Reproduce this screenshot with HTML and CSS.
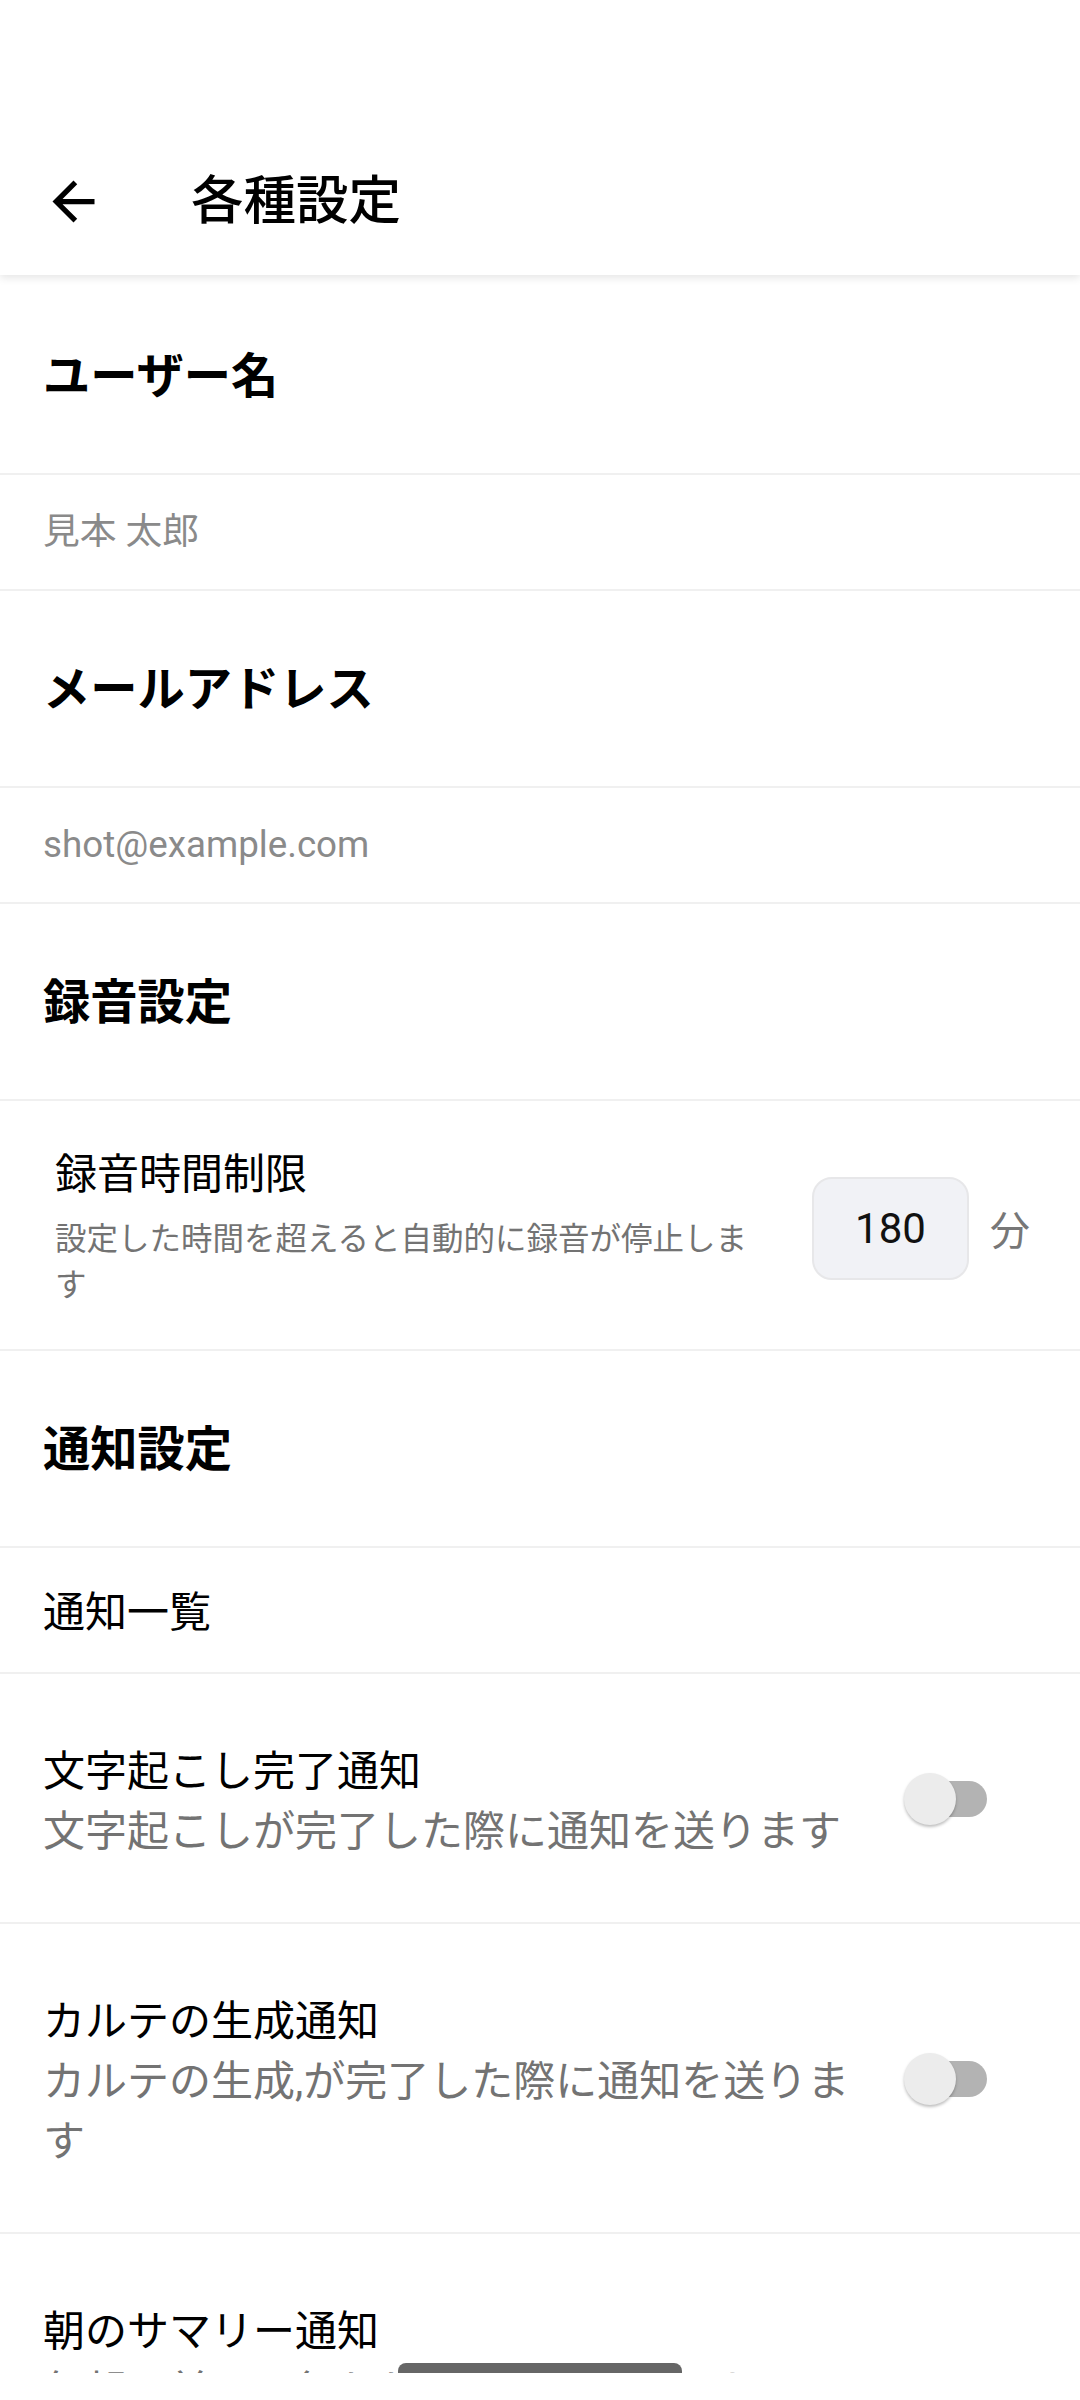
FILE: index.html
```html
<!DOCTYPE html>
<html lang="ja">
<head>
<meta charset="utf-8">
<title>各種設定</title>
<link rel="stylesheet" href="styles.css">
</head>
<body>
<div class="screen">
  <header class="appbar">
    <button class="back" aria-label="戻る">
      <svg viewBox="0 0 24 24" width="63" height="63"><path d="M20 11H7.83l5.59-5.59L12 4l-8 8 8 8 1.41-1.41L7.83 13H20v-2z" fill="#000"/></svg>
    </button>
    <h1 class="title">各種設定</h1>
  </header>

  <main class="list">
    <div class="section-head first">ユーザー名</div>
    <div class="value-row">見本 太郎</div>

    <div class="section-head">メールアドレス</div>
    <div class="value-row">shot@example.com</div>

    <div class="section-head">録音設定</div>
    <div class="limit-row">
      <div class="limit-text">
        <div class="limit-title">録音時間制限</div>
        <div class="limit-desc">設定した時間を超えると自動的に録音が停止します</div>
      </div>
      <div class="num-box">180</div>
      <div class="unit">分</div>
    </div>

    <div class="section-head">通知設定</div>
    <div class="link-row">通知一覧</div>

    <div class="toggle-row">
      <div class="toggle-text">
        <div class="toggle-title">文字起こし完了通知</div>
        <div class="toggle-desc">文字起こしが完了した際に通知を送ります</div>
      </div>
      <div class="switch"><span class="track"></span><span class="thumb"></span></div>
    </div>

    <div class="toggle-row">
      <div class="toggle-text">
        <div class="toggle-title">カルテの生成通知</div>
        <div class="toggle-desc">カルテの生成,が完了した際に通知を送ります</div>
      </div>
      <div class="switch"><span class="track"></span><span class="thumb"></span></div>
    </div>

    <div class="toggle-row">
      <div class="toggle-text">
        <div class="toggle-title">朝のサマリー通知</div>
        <div class="toggle-desc">毎朝、前日に行われた文字起こしとカルテの生成状況をまとめたサマリーを通知で送ります</div>
      </div>
      <div class="switch"><span class="track"></span><span class="thumb"></span></div>
    </div>
  </main>

  <div class="navbar"><div class="pill"></div></div>
</div>
</body>
</html>
```

FILE: styles.css
```css
html, body {
  margin: 0;
  padding: 0;
  width: 1080px;
  height: 2400px;
  overflow: hidden;
  background: #fff;
}

.screen {
  width: 1080px;
  height: 2400px;
  overflow: hidden;
  font-family: "Roboto", "Noto Sans CJK JP", sans-serif;
  color: #000;
  background: #fff;
}

.appbar {
  position: relative;
  z-index: 2;
  box-sizing: border-box;
  height: 275px;
  padding: 128px 0 0 42px;
  display: flex;
  align-items: center;
  background: #fff;
  box-shadow: 0 3px 8px rgba(0, 0, 0, 0.10);
}

.back {
  width: 63px;
  height: 63px;
  padding: 0;
  margin: 0;
  border: 0;
  background: none;
  display: flex;
}

.title {
  margin: 0 0 0 86px;
  font-size: 52.5px;
  font-weight: 500;
  line-height: 1;
  letter-spacing: 0;
}

.list {
  display: flex;
  flex-direction: column;
}

.section-head {
  padding: 66px 43px 63px;
  font-size: 47.25px;
  font-weight: 700;
  line-height: 66px;
  border-bottom: 2px solid #f0f0f0;
}

.section-head.first {
  padding-top: 69px;
}

.value-row {
  padding: 30px 43px;
  font-size: 36.75px;
  line-height: 54px;
  color: #8a8a8a;
  border-bottom: 2px solid #f0f0f0;
}

.limit-row {
  display: flex;
  align-items: center;
  padding: 46px 50px 40px 43px;
  border-bottom: 2px solid #f0f0f0;
}

.limit-text {
  flex: 1;
  padding-left: 12px;
  margin-right: 42px;
}

.limit-title {
  font-size: 42px;
  line-height: 56px;
}

.limit-desc {
  margin-top: 14px;
  font-size: 31.5px;
  line-height: 46px;
  color: #737373;
}

.num-box {
  box-sizing: border-box;
  width: 157px;
  height: 103px;
  display: flex;
  align-items: center;
  justify-content: center;
  background: #f1f2f6;
  border: 2px solid #e7e7e9;
  border-radius: 20px;
  font-size: 42px;
  color: #111;
}

.unit {
  margin-left: 21px;
  width: 40px;
  font-size: 40px;
  color: #777;
}

.link-row {
  padding: 35px 43px 29px;
  font-size: 42px;
  line-height: 60px;
  border-bottom: 2px solid #f0f0f0;
}

.toggle-row {
  display: flex;
  align-items: center;
  padding: 68px 93px 60px 43px;
  border-bottom: 2px solid #f0f0f0;
}

.toggle-text {
  flex: 1;
  margin-right: 34px;
}

.toggle-title {
  font-size: 42px;
  line-height: 60px;
}

.toggle-desc {
  font-size: 42px;
  line-height: 60px;
  color: #737373;
}

.switch {
  position: relative;
  flex: none;
  width: 83px;
  height: 52px;
  margin-top: -6px;
}

.track {
  position: absolute;
  left: 8px;
  top: 8px;
  width: 75px;
  height: 36px;
  border-radius: 18px;
  background: #b3b3b3;
}

.thumb {
  position: absolute;
  left: 0;
  top: 0;
  width: 52px;
  height: 52px;
  border-radius: 50%;
  background: #ececec;
  box-shadow: 0 2px 3px rgba(0, 0, 0, 0.25);
}

.navbar {
  position: fixed;
  left: 0;
  bottom: 0;
  width: 1080px;
  height: 27px;
  background: #fff;
  z-index: 5;
}

.pill {
  position: absolute;
  left: 398px;
  top: -10px;
  width: 284px;
  height: 10px;
  border-radius: 8px 8px 0 0;
  background: #666;
}
```
